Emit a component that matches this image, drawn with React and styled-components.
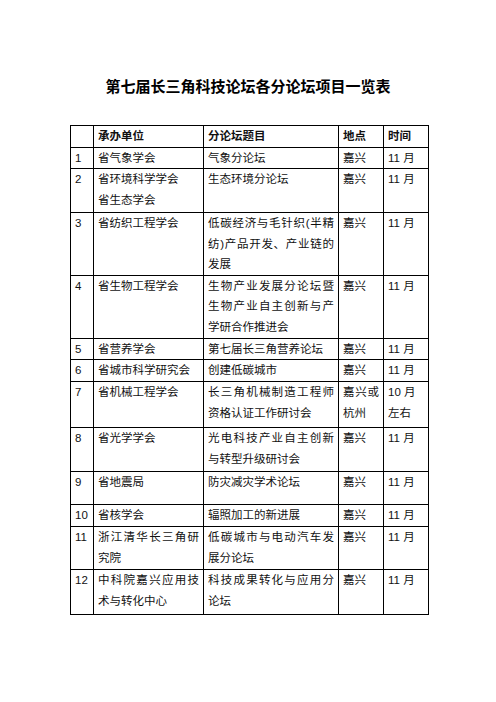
import React from "react";
import styled, { createGlobalStyle } from "styled-components";

const Global = createGlobalStyle`
  html, body { margin: 0; padding: 0; background: #fff; }
  body { font-family: "Liberation Sans", "Noto Sans CJK SC", sans-serif; color: #000; }
`;

const Page = styled.div`
  width: 496px;
  height: 702px;
  box-sizing: border-box;
  padding-top: 78px;
  background: #fff;
`;

const Title = styled.h1`
  margin: 0;
  font-size: 15px;
  line-height: 18px;
  font-weight: 700;
  text-align: center;
  font-family: "Liberation Sans", "Noto Sans CJK SC", sans-serif;
  color: #000;
`;

const Table = styled.table`
  margin: 29px 0 0 70px;
  border-collapse: collapse;
  table-layout: fixed;
  width: 358px;
  font-size: 11.5px;
  line-height: 20.5px;
`;

const Col = styled.col`
  width: ${(p) => p.$w}px;
`;

const Row = styled.tr`
  height: ${(p) => p.$h}px;
`;

const Cell = styled.td`
  border: 1px solid #000;
  padding: 0 4px 0 4px;
  vertical-align: top;
  text-align: ${(p) => (p.$left ? "left" : "justify")};
  font-weight: ${(p) => (p.$head ? 700 : 400)};
  color: #111;
  word-break: break-all;
`;

const rows = [
  { h: 21, c: ["1", "省气象学会", "气象分论坛", "嘉兴", "11 月"] },
  { h: 44, c: ["2", ["省环境科学学会", "省生态学会"], "生态环境分论坛", "嘉兴", "11 月"] },
  { h: 61, c: ["3", "省纺织工程学会", "低碳经济与毛针织(半精纺)产品开发、产业链的发展", "嘉兴", "11 月"] },
  { h: 63, c: ["4", "省生物工程学会", "生物产业发展分论坛暨生物产业自主创新与产学研合作推进会", "嘉兴", "11 月"] },
  { h: 21, c: ["5", "省营养学会", "第七届长三角营养论坛", "嘉兴", "11 月"] },
  { h: 22, c: ["6", "省城市科学研究会", "创建低碳城市", "嘉兴", "11 月"] },
  { h: 46, c: ["7", "省机械工程学会", "长三角机械制造工程师资格认证工作研讨会", "嘉兴或杭州", ["10 月", "左右"]] },
  { h: 44, c: ["8", "省光学学会", "光电科技产业自主创新与转型升级研讨会", "嘉兴", "11 月"] },
  { h: 33, c: ["9", "省地震局", "防灾减灾学术论坛", "嘉兴", "11 月"] },
  { h: 22, c: ["10", "省核学会", "辐照加工的新进展", "嘉兴", "11 月"] },
  { h: 43, c: ["11", "浙江清华长三角研究院", "低碳城市与电动汽车发展分论坛", "嘉兴", "11 月"] },
  { h: 45, c: ["12", "中科院嘉兴应用技术与转化中心", "科技成果转化与应用分论坛", "嘉兴", "11 月"] },
];

const widths = [23, 110, 135, 45, 45];

export default function App() {
  return (
    <Page>
      <Global />
      <Title>第七届长三角科技论坛各分论坛项目一览表</Title>
      <Table>
        <colgroup>
          {widths.map((w, i) => (
            <Col key={i} $w={w} />
          ))}
        </colgroup>
        <tbody>
          <Row $h={21}>
            <Cell $head></Cell>
            <Cell $head>承办单位</Cell>
            <Cell $head>分论坛题目</Cell>
            <Cell $head>地点</Cell>
            <Cell $head>时间</Cell>
          </Row>
          {rows.map((r, i) => (
            <Row key={i} $h={r.h}>
              {r.c.map((t, j) => (
                <Cell key={j} $left={j === 4}>
                  {Array.isArray(t)
                    ? t.map((s, k) => (
                        <React.Fragment key={k}>
                          {k > 0 && <br />}
                          {s}
                        </React.Fragment>
                      ))
                    : t}
                </Cell>
              ))}
            </Row>
          ))}
        </tbody>
      </Table>
    </Page>
  );
}
